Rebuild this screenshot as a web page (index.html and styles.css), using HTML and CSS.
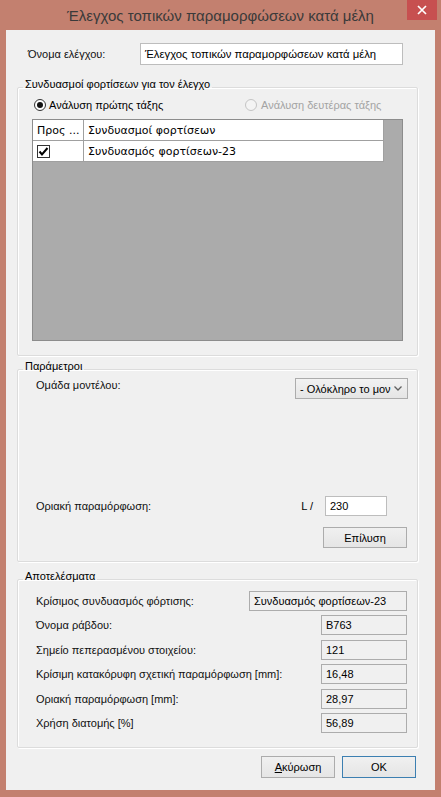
FILE: index.html
```html
<!DOCTYPE html>
<html lang="el">
<head>
<meta charset="utf-8">
<title>Έλεγχος τοπικών παραμορφώσεων κατά μέλη</title>
<link rel="stylesheet" href="styles.css">
</head>
<body>
<div class="window">
  <div class="titlebar">
    <span class="title">Έλεγχος τοπικών παραμορφώσεων κατά μέλη</span>
    <div class="close"><svg width="10" height="10" viewBox="0 0 10 10"><path d="M1 1L9 9M9 1L1 9" stroke="#fff" stroke-width="1.7"/></svg></div>
  </div>
  <div class="client">
    <div class="name-row">
      <span class="label name-label">Όνομα ελέγχου:</span>
      <div class="textbox name-box">Έλεγχος τοπικών παραμορφώσεων κατά μέλη</div>
    </div>

    <fieldset class="group g1">
      <legend>Συνδυασμοί φορτίσεων για τον έλεγχο</legend>
      <div class="radio-row">
        <div class="radio"><span class="dot checked"></span><span>Ανάλυση πρώτης τάξης</span></div>
        <div class="radio disabled"><span class="dot"></span><span>Ανάλυση δευτέρας τάξης</span></div>
      </div>
      <div class="grid">
        <div class="grid-row head"><div class="c1">Προς ...</div><div class="c2">Συνδυασμοί φορτίσεων</div></div>
        <div class="grid-row"><div class="c1"><span class="check"><svg width="11" height="11" viewBox="0 0 11 11"><path d="M1.5 5.5L4 8.5L9.5 2" fill="none" stroke="#000" stroke-width="2"/></svg></span></div><div class="c2">Συνδυασμός φορτίσεων-23</div></div>
      </div>
    </fieldset>

    <fieldset class="group g2">
      <legend>Παράμετροι</legend>
      <div class="param-row">
        <span class="label group-label">Ομάδα μοντέλου:</span>
        <div class="combo"><span class="combo-text">- Ολόκληρο το μον</span><svg class="chev" width="8" height="5" viewBox="0 0 8 5"><path d="M0.5 0.5L4 4L7.5 0.5" fill="none" stroke="#606060" stroke-width="1.3"/></svg></div>
      </div>
      <div class="param-row limit-row">
        <span class="label">Οριακή παραμόρφωση:</span>
        <span class="l-label">L /</span>
        <div class="textbox limit-box">230</div>
      </div>
      <div class="solve-row">
        <div class="button solve">Επίλυση</div>
      </div>
    </fieldset>

    <fieldset class="group g3">
      <legend>Αποτελέσματα</legend>
      <div class="results">
        <div class="res-row"><span class="label">Κρίσιμος συνδυασμός φόρτισης:</span><div class="rbox wide">Συνδυασμός φορτίσεων-23</div></div>
        <div class="res-row"><span class="label">Όνομα ράβδου:</span><div class="rbox">B763</div></div>
        <div class="res-row"><span class="label">Σημείο πεπερασμένου στοιχείου:</span><div class="rbox">121</div></div>
        <div class="res-row"><span class="label">Κρίσιμη κατακόρυφη σχετική παραμόρφωση [mm]:</span><div class="rbox">16,48</div></div>
        <div class="res-row"><span class="label">Οριακή παραμόρφωση [mm]:</span><div class="rbox">28,97</div></div>
        <div class="res-row"><span class="label">Χρήση διατομής [%]</span><div class="rbox">56,89</div></div>
      </div>
    </fieldset>

    <div class="dialog-buttons">
      <div class="button"><u>Α</u>κύρωση</div>
      <div class="button default">OK</div>
    </div>
  </div>
</div>
</body>
</html>
```

FILE: styles.css
```css
* { box-sizing: border-box; }
html, body { margin: 0; padding: 0; }
body {
  background: #c3806f;
  font-family: "Liberation Sans", Arial, sans-serif;
  font-size: 11px;
  color: #000;
}
.window {
  width: 441px;
  height: 797px;
  background: #c3806f;
  padding: 0 6px 7px 6px;
  display: flex;
  flex-direction: column;
}
.titlebar {
  height: 30px;
  position: relative;
  display: flex;
  justify-content: center;
  align-items: center;
}
.title {
  font-family: "Liberation Sans", Arial, sans-serif;
  font-size: 15px;
  color: #3a3a3a;
  margin-top: 1px;
}
.close {
  position: absolute;
  top: 0;
  right: -2px;
  width: 30px;
  height: 20px;
  background: #c75050;
  display: flex;
  align-items: center;
  justify-content: center;
}
.client {
  flex: 1;
  width: 429px;
  background: #f0f0f0;
  padding: 13px 0 0 11px;
  display: flex;
  flex-direction: column;
}
.label { white-space: nowrap; color: #111; }
.name-row {
  display: flex;
  align-items: center;
  height: 22px;
}
.name-label { width: 123px; padding-left: 11px; }
.textbox {
  background: #fff;
  border: 1px solid #bdbdbd;
  display: flex;
  align-items: center;
  padding-left: 4px;
  font-size: 11.5px;
}
.name-box { width: 263px; height: 22px; font-size: 11.3px; }

.group {
  margin: 0;
  padding: 0;
  width: 401px;
  border: 1px solid #dcdcdc;
  box-shadow: 1px 1px 0 #fff, inset 1px 1px 0 #fff;
  border-radius: 2px;
  min-width: 0;
}
.group legend {
  padding: 0 2px 6px 2px;
  line-height: 12px;
  font-size: 11px;
}
.g1 {
  margin-top: 13px;
  height: 278px;
  padding: 0 14px;
}
.g1 legend { margin-left: -9px; }
.radio-row {
  margin-top: 2px;
  height: 13px;
  display: flex;
  align-items: center;
  font-size: 11px;
}
.radio { display: flex; align-items: center; gap: 3px; }
.radio:first-child { margin-left: 2px; width: 211px; }
.dot {
  width: 12px;
  height: 12px;
  border-radius: 50%;
  border: 1px solid #333;
  background: #fff;
  display: flex;
  align-items: center;
  justify-content: center;
}
.dot.checked::after {
  content: "";
  width: 6px;
  height: 6px;
  border-radius: 50%;
  background: #111;
}
.radio.disabled { color: #a3a3a3; gap: 4px; }
.radio.disabled .dot { border-color: #c4c4c4; background: #f4f4f4; }

.grid {
  margin-top: 8px;
  width: 371px;
  height: 222px;
  border: 1px solid #8c8c8c;
  background: #ababab;
  font-family: "DejaVu Sans", Verdana, sans-serif;
  font-size: 11px;
}
.grid-row {
  display: flex;
  width: 351px;
  height: 21px;
  background: #fff;
  border-bottom: 1px solid #a0a0a0;
}
.grid-row .c1 {
  width: 51px;
  border-right: 1px solid #a0a0a0;
  padding-left: 4px;
  display: flex;
  align-items: center;
}
.grid-row .c2 {
  flex: 1;
  padding-left: 4px;
  display: flex;
  align-items: center;
  border-right: 1px solid #a0a0a0;
}
.check {
  width: 13px;
  height: 13px;
  border: 1px solid #333;
  background: #fff;
  display: flex;
  align-items: center;
  justify-content: center;
}

.g2 {
  margin-top: 4px;
  height: 202px;
  padding: 0 9px 0 18px;
}
.g2 legend, .g3 legend { margin-left: -13px; }
.param-row {
  display: flex;
  align-items: flex-start;
}
.group-label { padding-top: 1px; }
.combo {
  margin-left: auto;
  width: 113px;
  height: 21px;
  border: 1px solid #acacac;
  background: linear-gradient(#f2f2f2, #e5e5e5);
  display: flex;
  align-items: center;
  padding: 0 5px 0 4px;
  font-size: 11px;
}
.combo-text { flex: 1; white-space: nowrap; }
.chev { flex: none; margin-left: 2px; }
.limit-row {
  margin-top: 97px;
  align-items: center;
}
.l-label { margin-left: auto; font-size: 11px; }
.limit-box {
  margin-left: 12px;
  margin-right: 21px;
  width: 62px;
  height: 20px;
  font-size: 11px;
}
.solve-row {
  display: flex;
  justify-content: flex-end;
  margin-top: 11px;
  padding-right: 1px;
}
.button {
  height: 22px;
  border: 1px solid #acacac;
  background: linear-gradient(#f0f0f0, #e5e5e5);
  display: flex;
  align-items: center;
  justify-content: center;
  font-size: 11px;
}
.button u { text-decoration-thickness: 1px; }
.solve { width: 84px; height: 21px; }

.g3 {
  margin-top: 8px;
  height: 178px;
  padding: 0 10px 0 18px;
}
.results {
  margin-top: 3px;
  display: flex;
  flex-direction: column;
  gap: 4.4px;
}
.res-row {
  display: flex;
  align-items: center;
  justify-content: space-between;
  height: 20px;
}
.rbox {
  width: 86px;
  height: 20px;
  border: 1px solid #acacac;
  background: #f0f0f0;
  display: flex;
  align-items: center;
  padding-left: 4px;
  font-size: 11px;
}
.rbox.wide { width: 158px; }

.dialog-buttons {
  margin-top: 8px;
  display: flex;
  justify-content: flex-end;
  gap: 7px;
  padding-right: 19px;
}
.dialog-buttons .button { width: 74px; }
.button.default { border-color: #3c7fb1; }
```
